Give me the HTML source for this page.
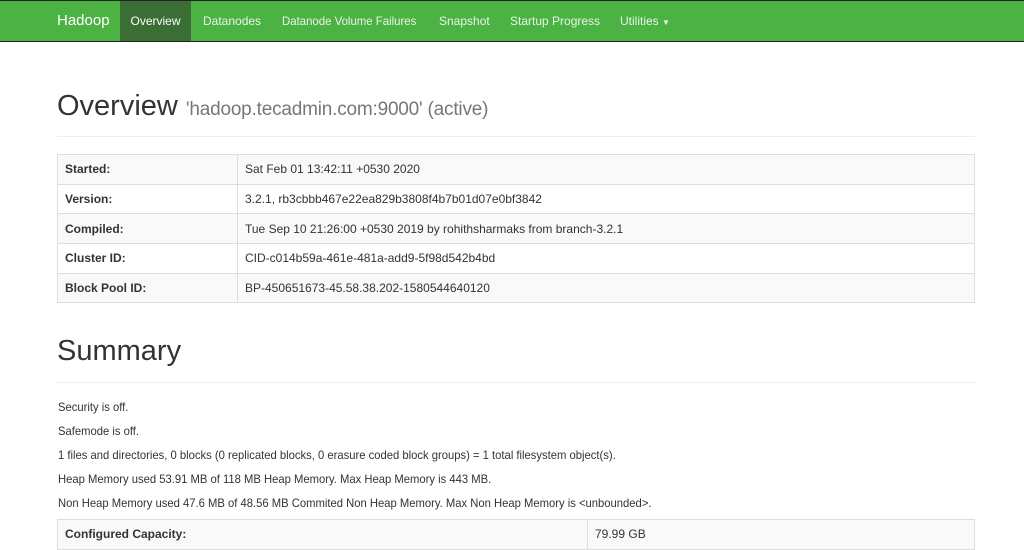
<!DOCTYPE html><html><head><style>
body{margin:0;width:1024px;height:540px;overflow:hidden;background:#fff;font-family:"Liberation Sans",sans-serif;color:#333;font-size:12px;position:relative}
.nav{position:absolute;left:0;top:0;width:1024px;height:40px;background:#4cb244;border-top:1px solid #222;border-bottom:1px solid #222}
.nav span{position:absolute;top:0;line-height:40px;color:#e8f5e6;font-size:12px}
.act{background:#3a6e35;height:40px;}
.abs{position:absolute}
table{position:absolute;left:57px;width:918px;border-collapse:collapse;font-size:12px}
td{border:1px solid #ddd;height:28.7px;padding:0 0 0 7px}
tr:nth-child(odd) td{background:#f9f9f9}
td:first-child{font-weight:bold}
.p{position:absolute;left:58px;font-size:12px;transform:scaleX(0.937);transform-origin:0 0;white-space:nowrap}
</style></head><body>
<div class="nav">
<span style="left:57px;font-size:15px;color:#fff">Hadoop</span>
<span class="act" style="left:120px;width:71px;text-align:center;color:#fff">Overview</span>
<span style="left:203px">Datanodes</span>
<span style="left:282px;transform:scaleX(0.95);transform-origin:0 0">Datanode Volume Failures</span>
<span style="left:439px">Snapshot</span>
<span style="left:510px">Startup Progress</span>
<span style="left:620px">Utilities <span style="position:static;font-size:8px">▼</span></span>
</div>
<div class="abs" style="left:57px;top:86px;font-size:29px;line-height:40px">Overview <span style="font-size:19px;color:#777;letter-spacing:-0.2px">'hadoop.tecadmin.com:9000' (active)</span></div>
<div class="abs" style="left:57px;top:136px;width:918px;border-top:1px solid #eee"></div>
<table style="top:154px">
<tr><td style="width:172px">Started:</td><td>Sat Feb 01 13:42:11 +0530 2020</td></tr>
<tr><td>Version:</td><td>3.2.1, rb3cbbb467e22ea829b3808f4b7b01d07e0bf3842</td></tr>
<tr><td>Compiled:</td><td>Tue Sep 10 21:26:00 +0530 2019 by rohithsharmaks from branch-3.2.1</td></tr>
<tr><td>Cluster ID:</td><td>CID-c014b59a-461e-481a-add9-5f98d542b4bd</td></tr>
<tr><td>Block Pool ID:</td><td>BP-450651673-45.58.38.202-1580544640120</td></tr>
</table>
<div class="abs" style="left:57px;top:331px;font-size:29px;line-height:40px">Summary</div>
<div class="abs" style="left:57px;top:382px;width:918px;border-top:1px solid #eee"></div>
<div class="p" style="top:400px">Security is off.</div>
<div class="p" style="top:424px">Safemode is off.</div>
<div class="p" style="top:448px">1 files and directories, 0 blocks (0 replicated blocks, 0 erasure coded block groups) = 1 total filesystem object(s).</div>
<div class="p" style="top:472px">Heap Memory used 53.91 MB of 118 MB Heap Memory. Max Heap Memory is 443 MB.</div>
<div class="p" style="top:496px">Non Heap Memory used 47.6 MB of 48.56 MB Commited Non Heap Memory. Max Non Heap Memory is &lt;unbounded&gt;.</div>
<table style="top:519px">
<tr><td style="width:522px">Configured Capacity:</td><td>79.99 GB</td></tr>
</table>
</body></html>
